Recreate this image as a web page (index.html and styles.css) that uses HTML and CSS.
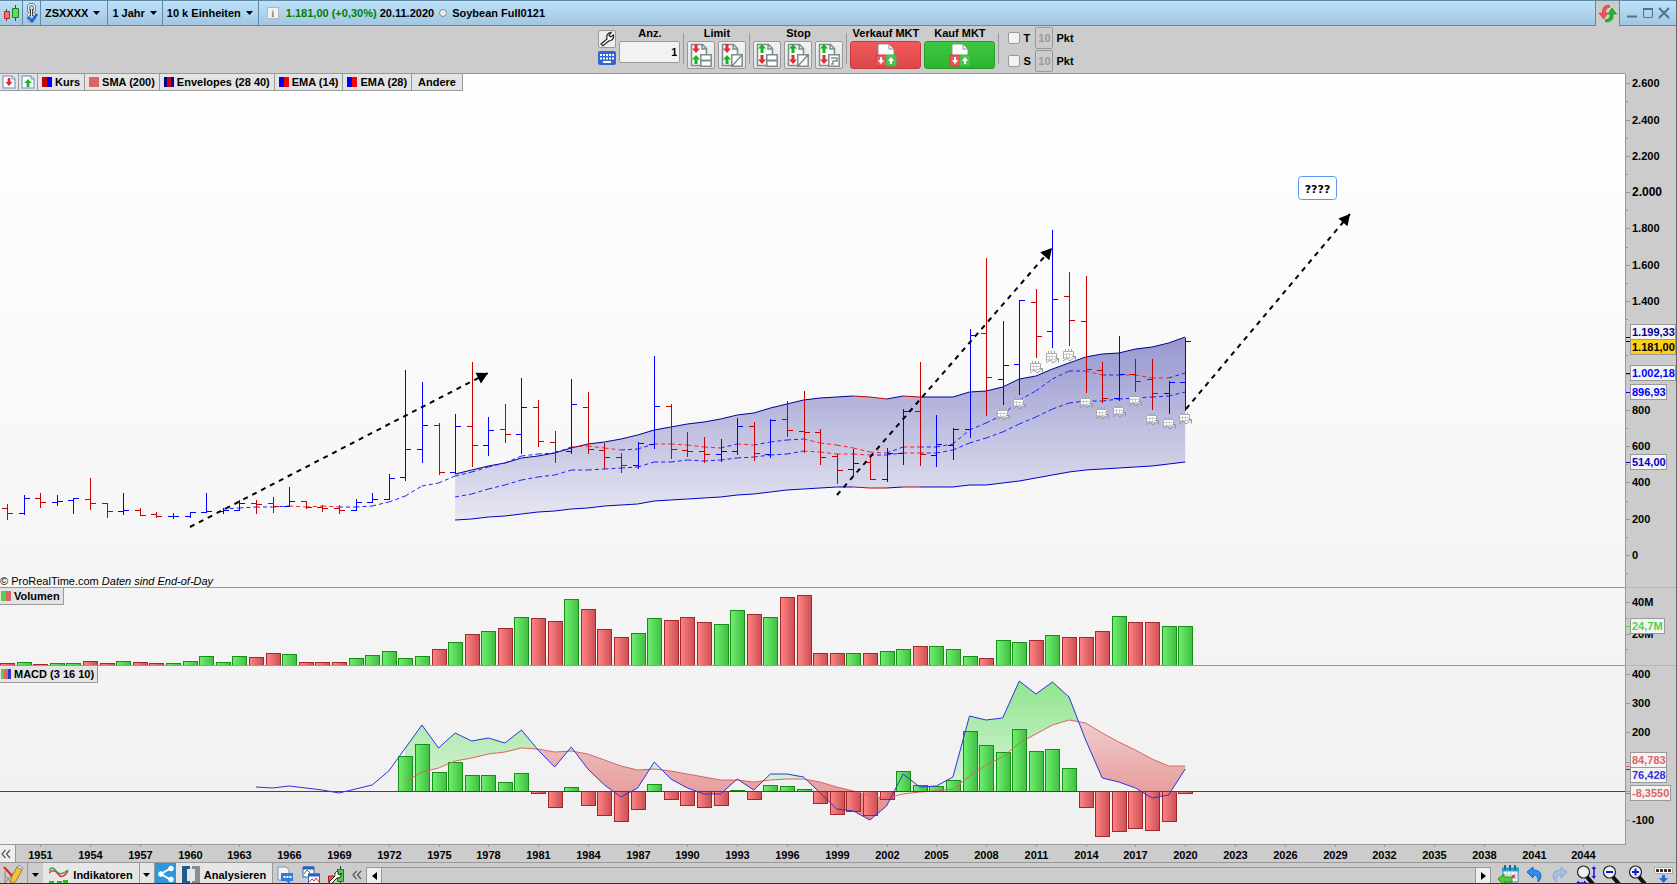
FILE: index.html
```html
<!DOCTYPE html>
<html lang="de">
<head>
  <meta charset="UTF-8">
  <meta name="viewport" content="width=device-width, initial-scale=1.0">
  <title>ZSXXXX - Soybean Full0121</title>
  <link rel="stylesheet" href="styles.css">
</head>
<body>

  <svg class="sprite" aria-hidden="true">
    <symbol id="order-doc" viewBox="0 0 22 24">
      <path d="M10 22.500H1.500V1.500h11l4 4V11M12 1.500v4.500h4.500" fill="#fafafa" stroke="#7d8c90" stroke-width="1.500"/>
    </symbol>
    <symbol id="arrow-down" viewBox="0 0 8 9">
      <path d="M2.500 0h3v4.500H8L4 9 0 4.500h2.500z"/>
    </symbol>
    <symbol id="arrow-up" viewBox="0 0 8 9">
      <path d="M2.500 9h3V4.500H8L4 0 0 4.500h2.500z"/>
    </symbol>
    <symbol id="box-line" viewBox="0 0 12 13">
      <path d="M.8.800h10.400v11.400H.8z" fill="#fff" stroke="#7d8c90" stroke-width="1.500"/>
      <path d="M1 6.500h10" stroke="#7d8c90" stroke-width="2"/>
    </symbol>
    <symbol id="box-slash" viewBox="0 0 12 13">
      <path d="M.8.800h10.400v11.400H.8zM1 12L11 1" fill="#fff" stroke="#7d8c90" stroke-width="1.500"/>
    </symbol>
    <symbol id="box-trail" viewBox="0 0 12 13">
      <path d="M.8.800h10.400v11.400H.8zM3 4h6v3H5v3H3" fill="#fff" stroke="#7d8c90" stroke-width="1.500"/>
    </symbol>
    <symbol id="market" viewBox="0 0 22 24">
      <path d="M3 13V2.500Q3 1 4.500 1H14l5 5v7z" fill="#fff" stroke="#8a8f8f"/>
      <path d="M14 1v5h5" fill="none" stroke="#8a8f8f"/>
      <path d="M1 12h10v11H2q-1 0-1-1z" fill="#e85a5e" stroke="#e23338"/>
      <path d="M11 12h10v10q0 1-1 1h-9z" fill="#4ec552" stroke="#35bb39"/>
      <path d="M5 14h2v3h2l-3 4-3-4h2zM15 21h2v-3h2l-3-4-3 4h2z" fill="#fff"/>
    </symbol>
    <symbol id="page" viewBox="0 0 14 14">
      <path d="M1 1h9l3 3v9H1z" fill="#fdfdfd" stroke="#8ab0cf" stroke-width="1.500"/>
      <path d="M10 1v3h3" fill="#dceaf5" stroke="#6f97b8"/>
    </symbol>
    <symbol id="lens" viewBox="0 0 20 20">
      <path d="M11 12l6 7" stroke="#111" stroke-width="4"/>
      <circle cx="7.500" cy="7" r="6" fill="#eef2f6" stroke="#222" stroke-width="1.200"/>
    </symbol>
    <symbol id="caret" viewBox="0 0 8 4"><path d="M0 0h7L3.500 4z"/></symbol>
  </svg>

  <div class="titlebar">
    <button class="title-item icon-candles" aria-label="Chart">
      <svg width="18" height="18" viewBox="0 0 18 18"><path d="M4.500 5v12M13.500 1v16" stroke="#444"/><path d="M2.500 7.500h5v7h-5z" fill="#e8787a" stroke="#c22"/><path d="M10.500 4.500h6v9h-6z" fill="#63db63" stroke="#17821a"/></svg>
    </button>
    <button class="title-item icon-chain" aria-label="Verknüpfung">
      <svg width="14" height="20" viewBox="0 0 14 20"><rect x="3.500" y="1.500" width="6" height="8" rx="3" fill="none" stroke="#555" stroke-width="3"/><rect x="3.500" y="1.500" width="6" height="8" rx="3" fill="none" stroke="#eee" stroke-width="1.500"/><rect x="3.500" y="10" width="6" height="8" rx="3" fill="none" stroke="#777" stroke-width="3"/><rect x="3.500" y="10" width="6" height="8" rx="3" fill="none" stroke="#eee" stroke-width="1.500"/><path d="M6.500 6v7" stroke="#444" stroke-width="3"/><path d="M6.500 6v7" stroke="#eee"/><path d="M3 14l4 4 5-7" fill="none" stroke="#1e66d8" stroke-width="2.500"/></svg>
    </button>
    <button class="title-item symbol-name">ZSXXXX<svg class="caret"><use href="#caret"/></svg></button>
    <button class="title-item">1 Jahr<svg class="caret"><use href="#caret"/></svg></button>
    <button class="title-item">10 k Einheiten<svg class="caret"><use href="#caret"/></svg></button>
    <div class="title-info">
      <span class="info-box">i</span>
      <span><span class="gain">1.181,00 (+0,30%)</span> 20.11.2020</span>
      <span class="dot"></span>
      <span>Soybean Full0121</span>
    </div>
    <button class="sync-tab" aria-label="Synchronisieren">
      <svg width="19" height="19" viewBox="0 0 19 19"><path d="M11 1Q4 1 4.500 9H1l4.500 6L10 9H7.500Q7 4 12 3z" fill="#f05558" stroke="#c33" stroke-width=".6"/><path d="M8 18q8 0 7-8h3.500L14 4 10 10h2q1 5-5 6z" fill="#22b52a" stroke="#0a8a12" stroke-width=".6"/></svg>
    </button>
    <div class="window-buttons">
      <button aria-label="Minimieren"><svg width="12" height="12"><path d="M1 9.500h10" stroke="#4b7590" stroke-width="2"/></svg></button>
      <button aria-label="Maximieren"><svg width="12" height="12"><path d="M1.500 1.500h9v9h-9z" fill="none" stroke="#4b7590" stroke-width="1"/><path d="M1 2h10" stroke="#4b7590" stroke-width="2"/></svg></button>
      <button aria-label="Schließen"><svg width="12" height="12"><path d="M1 1l10 10M11 1L1 11" stroke="#4b7590" stroke-width="2"/></svg></button>
    </div>
  </div>

  <div class="order-bar">
    <div class="tool-column">
      <button class="small-tool" aria-label="Einstellungen">
        <svg width="16" height="16" viewBox="0 0 16 16"><path d="M2 13l6-5q-1-4 2-6l2-.500-2 3 1.500 1.500 3-2q.5 4-2.500 5.500l-2 .3-6 5z" fill="#fff" stroke="#222" stroke-width="1.200"/></svg>
      </button>
      <button class="keyboard" aria-label="Tastatur">
        <svg width="18" height="14" viewBox="0 0 18 14"><path d="M2 4h14M2 7.500h14" stroke="#fff" stroke-width="2" stroke-dasharray="2 1"/><path d="M5 11h8" stroke="#fff" stroke-width="2"/></svg>
      </button>
    </div>
    <div class="order-group quantity">
      <label for="anz">Anz.</label>
      <input id="anz" type="text" value="1">
    </div>
    <div class="divider"></div>
    <div class="order-group">
      <span>Limit</span>
      <div class="order-buttons">
        <button aria-label="Kauf Limit"><svg width="22" height="24"><use href="#order-doc"/><use href="#arrow-down" x="2" y="1" width="8" height="9" fill="#e02b30"/><use href="#arrow-up" x="2" y="12" width="8" height="9" fill="#17b51c"/><use href="#box-line" x="10" y="11" width="12" height="13"/></svg></button>
        <button aria-label="Limit"><svg width="22" height="24"><use href="#order-doc"/><use href="#arrow-down" x="2" y="1" width="8" height="9" fill="#e02b30"/><use href="#arrow-up" x="2" y="12" width="8" height="9" fill="#17b51c"/><use href="#box-slash" x="10" y="11" width="12" height="13"/></svg></button>
      </div>
    </div>
    <div class="divider"></div>
    <div class="order-group">
      <span>Stop</span>
      <div class="order-buttons">
        <button aria-label="Stop"><svg width="22" height="24"><use href="#order-doc"/><use href="#arrow-up" x="2" y="1" width="8" height="9" fill="#17b51c"/><use href="#arrow-down" x="2" y="12" width="8" height="9" fill="#e02b30"/><use href="#box-line" x="10" y="11" width="12" height="13"/></svg></button>
        <button aria-label="Stop Linie"><svg width="22" height="24"><use href="#order-doc"/><use href="#arrow-up" x="2" y="1" width="8" height="9" fill="#17b51c"/><use href="#arrow-down" x="2" y="12" width="8" height="9" fill="#e02b30"/><use href="#box-slash" x="10" y="11" width="12" height="13"/></svg></button>
        <button aria-label="Trailing Stop"><svg width="22" height="24"><use href="#order-doc"/><use href="#arrow-up" x="2" y="1" width="8" height="9" fill="#17b51c"/><use href="#arrow-down" x="2" y="12" width="8" height="9" fill="#e02b30"/><use href="#box-trail" x="10" y="11" width="12" height="13"/></svg></button>
      </div>
    </div>
    <div class="divider"></div>
    <div class="order-group">
      <span>Verkauf MKT</span>
      <button class="market sell" aria-label="Verkauf MKT"><svg width="22" height="24"><use href="#market"/></svg></button>
    </div>
    <div class="order-group">
      <span>Kauf MKT</span>
      <button class="market buy" aria-label="Kauf MKT"><svg width="22" height="24"><use href="#market"/></svg></button>
    </div>
    <div class="divider"></div>
    <div class="points">
      <div class="point-row"><label><input type="checkbox">T</label><input class="pts" type="text" value="10" aria-label="T Pkt" disabled>Pkt</div>
      <div class="point-row"><label><input type="checkbox">S</label><input class="pts" type="text" value="10" aria-label="S Pkt" disabled>Pkt</div>
    </div>
  </div>

  <div class="charts">
    <div class="pane">
      <svg id="price" class="plot"></svg>
      <div class="legend price-legend">
        <button class="page-button" aria-label="Verkaufen"><svg width="14" height="14"><use href="#page"/><use href="#arrow-down" x="3" y="3" width="8" height="8" fill="#e02b30"/></svg></button>
        <button class="page-button" aria-label="Kaufen"><svg width="14" height="14"><use href="#page"/><use href="#arrow-up" x="3" y="4" width="8" height="8" fill="#17b51c"/></svg></button>
        <button><i class="swatch kurs"></i>Kurs</button>
        <button><i class="swatch sma"></i>SMA (200)</button>
        <button><i class="swatch envelope"></i>Envelopes (28 40)</button>
        <button><i class="swatch ema"></i>EMA (14)</button>
        <button><i class="swatch ema"></i>EMA (28)</button>
        <button class="other">Andere</button>
      </div>
      <div class="credit">© ProRealTime.com <em>Daten sind End-of-Day</em></div>
    </div>
    <div class="axis"><svg id="price-axis" class="plot"></svg></div>

    <div class="pane">
      <svg id="volume" class="plot"></svg>
      <div class="legend"><button><i class="swatch volume"></i>Volumen</button></div>
    </div>
    <div class="axis"><svg id="volume-axis" class="plot"></svg></div>

    <div class="pane">
      <svg id="macd" class="plot"></svg>
      <div class="legend"><button><i class="swatch macd"></i>MACD (3 16 10)</button></div>
    </div>
    <div class="axis"><svg id="macd-axis" class="plot"></svg></div>
  </div>

  <div class="time-axis">
    <svg id="years" class="plot"></svg>
    <button class="collapse" aria-label="Einklappen"><svg width="10" height="10"><path d="M4.500 1L1 5l3.500 4M9 1L5.500 5 9 9" fill="none" stroke="#555" stroke-width="1.200"/></svg></button>
  </div>

  <div class="bottom-bar">
    <button class="draw" aria-label="Zeichnen"><svg width="22" height="20" viewBox="0 0 22 20"><path d="M2 6v12l8-10M2 10l7 9" fill="none" stroke="#888"/><path d="M1 2l10 11" stroke="#e02020" stroke-width="2"/><path d="M8 13l6-11 5 3-6 11-5 3z" fill="#f5c33c" stroke="#a77a1c"/><path d="M14 2l5 3 1-2-4-3z" fill="#ddd" stroke="#777" stroke-width=".7"/></svg></button>
    <button class="drop" aria-label="Zeichenmenü"><svg class="caret"><use href="#caret"/></svg></button>
    <button class="light indicators"><svg width="20" height="20" viewBox="0 0 20 20"><path d="M0 6q3-6 7 0t12-1" fill="none" stroke="#39a93e" stroke-width="1.500"/><path d="M0 8q5-5 9 1t10-3" fill="none" stroke="#c44" stroke-width="1.500"/><path d="M0 20v-4h5v2h3v-2h5v4zM14 20v-5h5v5z" fill="#1fc020"/><path d="M5 18h9v2H5z" fill="#d23"/></svg>Indikatoren</button>
    <button class="light drop" aria-label="Indikatormenü"><svg class="caret"><use href="#caret"/></svg></button>
    <button class="share" aria-label="Teilen"><svg width="18" height="18" viewBox="0 0 18 18"><path d="M14 3L4 9l10 6" fill="none" stroke="#fff" stroke-width="2"/><circle cx="14" cy="3.500" r="2.700" fill="#fff"/><circle cx="4" cy="9" r="2.700" fill="#fff"/><circle cx="14" cy="14.500" r="2.700" fill="#fff"/></svg></button>
    <button class="light analyse"><svg width="18" height="20" viewBox="0 0 18 20"><path d="M0 1h8v3H5v12h3v4H0z" fill="#1d5c8c"/><path d="M10 1h8v19h-8v-4h3V4h-3z" fill="#8b8e91"/></svg>Analysieren</button>
    <button class="tool" aria-label="Kommentar"><svg width="17" height="20" viewBox="0 0 17 20"><path d="M1 2h8l3 3v10H1z" fill="#f2f6fa" stroke="#7c93a8"/><path d="M4 8h12v8h-3v3l-4-3H4z" fill="#2f7be0"/><path d="M6.500 12h8" stroke="#fff" stroke-width="2" stroke-dasharray="2 1"/></svg></button>
    <button class="tool" aria-label="Charts anordnen"><svg width="18" height="20" viewBox="0 0 18 20"><path d="M1 2h11v10H1z" fill="#fff" stroke="#2660c8"/><path d="M1 3h11" stroke="#2660c8" stroke-width="3"/><path d="M6.500 9h11v10h-11z" fill="#fff" stroke="#2660c8"/><path d="M6 10h12" stroke="#2660c8" stroke-width="3"/><path d="M2 9l3-4 3 3" fill="none" stroke="#1a9c20"/><path d="M7 17l3-3 2 2 2-3 3 4" fill="none" stroke="#d22"/></svg></button>
    <button class="tool" aria-label="Einstellungen"><svg width="18" height="20" viewBox="0 0 18 20"><path d="M13.500 1v18" stroke="#333"/><path d="M10.500 4.500h6v12h-6z" fill="#45cf49" stroke="#147e18"/><path d="M1.500 11h5v6h-5z" fill="#e2585c" stroke="#b11"/><path d="M2 17l6-6q-1-4 3-5v3l2 1 1-2q1 5-4 5l-6 6z" fill="#fff" stroke="#222"/></svg></button>
    <button class="tool fold" aria-label="Weniger"><svg width="10" height="10"><path d="M4.500 1L1 5l3.500 4M9 1L5.500 5 9 9" fill="none" stroke="#555" stroke-width="1.200"/></svg></button>
    <div class="scroller">
      <button aria-label="Zurück"><svg width="5" height="8"><path d="M5 0v8L0 4z"/></svg></button>
      <button aria-label="Vor"><svg width="5" height="8"><path d="M0 0v8l5-4z"/></svg></button>
    </div>
    <div class="zoom-tools">
      <button aria-label="Zum Datum"><svg width="22" height="20" viewBox="0 0 22 20"><path d="M6 4h15v13H6z" fill="#fff" stroke="#3f86a8"/><path d="M5 4.500h17" stroke="#2f9fc5" stroke-width="4"/><path d="M8 0v5M13 0v5M18 0v5" stroke="#176f94" stroke-width="2"/><path d="M7 10h14M7 13h14M10 7v9M14 7v9M18 7v9" stroke="#b5cbd6"/><path d="M15 10h3v3h-3z" fill="#e44"/><path d="M1 14l6-5v3h8v5H7v3z" fill="#52cd35" stroke="#2b9518"/></svg></button>
      <button aria-label="Rückgängig"><svg width="18" height="18" viewBox="0 0 18 18"><path d="M2 7l6-5v3q8 0 8 6 0 3-3 6 1-7-5-7v3z" fill="#2e8ff0" stroke="#1a62c0"/></svg></button>
      <button aria-label="Wiederholen"><svg width="18" height="18" viewBox="0 0 18 18"><path d="M16 7l-6-5v3Q2 5 2 11q0 3 3 6-1-7 5-7v3z" fill="#a4bfdf" stroke="#8ea9cd"/></svg></button>
      <button aria-label="Zoom anpassen"><svg width="20" height="20"><use href="#lens" x="0" y="0" width="20" height="20"/><path d="M18 3v10M2 18h8" stroke="#1414e0" stroke-width="1.500"/><path d="M15.500 4L18 1l2 3zM15.500 11l2.500 3 2-3zM3 15.500v5L0 18zM8 15.500v5l3-2.500z" fill="#1414e0"/></svg></button>
      <button aria-label="Verkleinern"><svg width="20" height="20"><use href="#lens" width="20" height="20"/><path d="M4 7h7" stroke="#1414e0" stroke-width="2"/></svg></button>
      <button aria-label="Vergrößern"><svg width="20" height="20"><use href="#lens" width="20" height="20"/><path d="M4 7h7M7.500 3.500v7" stroke="#1414e0" stroke-width="2"/></svg></button>
      <button aria-label="Leiste ausblenden"><svg width="19" height="18"><path d="M.5 2.500h18v6H.5z" fill="#fff" stroke="#aaa"/><path d="M2 5.500h15" stroke="#333" stroke-width="3" stroke-dasharray="3 1"/><path d="M8 10h3v3h3l-4.500 5L5 13h3z" fill="#1f6fd0"/></svg></button>
    </div>
  </div>

  <script>
    // plot units: 1625 wide, y counted from the top of the window
    const PLOT_WIDTH = 1625;
    const panes = {
      price: { top: 74, height: 513 },
      volume: { top: 588, height: 77 },
      macd: { top: 666, height: 178 }
    };

    // yearly bars from 1949: open, high, low, close
    const bars = [
      [508,504,519,513],[513,495,514,498],[498,493,507,502],[502,495,505,501],[500,498,513,498],[499,478,509,503],
      [503,503,517,511],[511,493,514,510],[510,508,515,515],[514,512,517,516],[516,513,518,516],[516,512,517,512],
      [512,493,512,511],[511,508,513,510],[510,500,510,503],[503,500,513,504],[503,497,512,506],[506,487,506,501],
      [501,501,508,507],[507,505,511,508],[508,505,513,510],[510,499,510,502],[502,493,502,499],[499,474,499,478],
      [477,370,480,449],[449,382,462,425],[425,423,474,472],[472,414,473,426],[426,362,466,445],[445,417,455,430],
      [429,404,442,434],[434,378,453,407],[407,400,446,441],[442,431,462,451],[451,379,453,404],[407,392,453,449],
      [450,443,468,457],[457,453,472,465],[465,442,468,443],[444,356,448,406],[406,404,458,449],[450,432,456,451],
      [451,437,462,454],[454,439,461,451],[451,418,454,426],[426,422,460,453],[454,419,457,420],[419,401,436,430],
      [431,391,452,432],[432,429,464,457],[456,454,483,470],[469,449,475,463],[462,455,479,479],[479,448,481,453],
      [453,409,464,411],[411,362,465,454],[455,415,466,444],[445,428,459,429],[429,329,437,335],[333,258,415,377],
      [379,321,404,365],[364,300,394,300],[302,289,357,336],[331,230,347,299],[296,272,345,320],[321,276,392,369],
      [370,362,402,398],[398,336,400,374],[374,359,391,381],[379,359,409,393],[393,381,413,382],[382,338,410,341]
    ];
    const volume = [
      663,662,664,663,663,661,663,661,662,663,663,661,656,662,656,657,653,654,662,662,662,658,655,651,
      658,656,649,642,634,631,628,617,618,621,599,609,629,637,633,618,620,617,622,624,610,614,617,597,
      595,653,653,653,653,651,649,646,646,649,656,658,640,642,640,635,637,637,631,616,622,622,626,626
    ];
    // from 1976
    const upper = [474,470,466,463,458,456,453,448,444,442,439,435,430,427,424,422,419,415,413,408,404,400,398,397,396,
      397,399,396,397,397,397,392,391,387,379,376,369,363,357,354,353,349,347,343,337];
    const lower = [520,519,517,516,514,512,511,509,508,506,505,504,501,500,499,498,497,495,494,492,490,489,488,487,487,
      488,488,487,487,487,487,485,485,483,481,478,475,472,470,469,468,467,466,464,462];
    const ema28 = [497,494,489,485,480,477,475,470,470,469,468,467,462,462,460,461,460,458,457,455,454,451,452,454,454,
      455,455,453,453,453,450,443,438,432,424,417,409,403,401,401,399,398,397,396,392];
    // from 1962
    const ema14 = [509,508,507,507,506,507,506,507,507,506,502,496,486,483,476,472,467,463,456,454,453,447,446,448,450,
      449,444,444,445,447,448,444,445,442,440,439,443,445,448,452,453,447,447,447,444,430,423,415,400,391,379,371,371,
      375,375,375,378,378,373];
    const envelopeDown = [2001, 2002, 2004];
    const ema28Down = [1998, 1999, 2000, 2001, 2004];
    const ema14Down = [1967, 1968, 1969, 1984, 1985, 1986, 1989, 1990, 1991, 1992, 1994, 1998, 1999, 2000, 2001, 2002,
      2004, 2015, 2017, 2018, 2019];
    // from 1973
    const histogram = [756,744,772,762,775,775,782,773,793,807,787,805,815,821,809,784,799,805,807,805,790,799,785,786,
      789,803,814,811,815,799,771,785,786,780,731,745,752,729,751,749,768,807,836,831,828,830,821,793];
    const signal = [782,772,768,761,758,754,752,748,749,752,751,754,760,766,770,769,771,774,777,780,780,782,780,779,
      779,782,787,791,796,798,794,792,791,789,776,765,757,743,734,725,720,723,733,742,750,759,766,766];
    // from 1964
    const macdLine = [787,788,786,788,790,793,789,785,771,748,725,748,733,741,738,743,730,750,767,747,769,785,797,788,
      762,779,788,794,794,779,790,774,774,777,793,809,811,820,806,774,787,786,777,716,720,718,681,694,682,697,740,778,
      782,788,798,795,769];
    const rollovers = [[2009,414],[2010,403],[2011,367],[2012,357],[2013,355],[2014,402],[2015,413],[2016,411],
      [2017,400],[2018,419],[2019,423],[2020,418]];
    const trends = [[190,527,488,373],[837,495,1052,248],[1186,409,1350,214]];
    const ZERO = 791;

    function scale(name) {
      const svg = document.getElementById(name);
      const pane = panes[name];
      const sx = svg.clientWidth / PLOT_WIDTH;
      const sy = svg.clientHeight / pane.height;
      return {
        svg,
        px: v => v * sx,
        x: year => (40.3 + 16.593 * (year - 1951)) * sx,
        y: v => (v - pane.top) * sy,
        height: svg.clientHeight
      };
    }

    const points = (s, start, values) => values.map((v, i) => `${s.x(start + i)},${s.y(v)}`);

    // a line drawn year by year, in red where it falls
    function trendLine(s, start, values, down, cls) {
      let up = '', red = '';
      for (let i = 1; i < values.length; i++) {
        const seg = `M${s.x(start + i - 1)} ${s.y(values[i - 1])}L${s.x(start + i)} ${s.y(values[i])}`;
        if (down.includes(start + i)) red += seg; else up += seg;
      }
      return `<path class="${cls}" d="${up}"/><path class="${cls} falling" d="${red}"/>`;
    }

    function column(s, year, top, bottom, up) {
      const x = Math.round(s.x(year)) - 7;
      const a = Math.round(s.y(Math.min(top, bottom)));
      const b = Math.round(s.y(Math.max(top, bottom)));
      return `<rect class="column ${up ? 'up' : 'down'}" x="${x + 0.5}" y="${a + 0.5}" width="14" height="${Math.max(b - a, 1)}"/>`;
    }

    function columnGradients() {
      return `<defs>
        <linearGradient id="upFill"><stop offset="0" stop-color="#70f070"/><stop offset="1" stop-color="#3fbe42"/></linearGradient>
        <linearGradient id="downFill"><stop offset="0" stop-color="#ff8484"/><stop offset="1" stop-color="#cc5053"/></linearGradient>
      </defs>`;
    }

    function drawPrice() {
      const s = scale('price');
      let out = `<defs><linearGradient id="band" gradientUnits="userSpaceOnUse" x1="0" x2="0" y1="${s.y(337)}" y2="${s.y(520)}">
        <stop offset="0" stop-color="#9797cf"/><stop offset="1" stop-color="#e8e8f2"/></linearGradient></defs>`;
      out += `<polygon fill="url(#band)" points="${points(s, 1976, upper).concat(points(s, 1976, lower).reverse()).join(' ')}"/>`;
      out += trendLine(s, 1976, upper, envelopeDown, 'envelope-line upper');
      out += trendLine(s, 1976, lower, envelopeDown, 'envelope-line');
      out += trendLine(s, 1962, ema14, ema14Down, 'ema-line');
      out += trendLine(s, 1976, ema28, ema28Down, 'ema-line');
      bars.forEach(([open, high, low, close], i) => {
        const x = Math.round(s.x(1949 + i)) + 0.5;
        const o = Math.round(s.y(open)) + 0.5;
        const c = Math.round(s.y(close)) + 0.5;
        out += `<path class="bar ${close <= open ? 'up' : 'down'}" d="M${x} ${s.y(high)}V${s.y(low) + 1}M${x - 5.5} ${o}H${x}M${x} ${c}h5.500"/>`;
      });
      rollovers.forEach(([year, y]) => {
        out += `<g class="rollover" transform="translate(${Math.round(s.x(year)) - 7} ${Math.round(s.y(y)) - 6})">
          <path d="M1 2h11v7H1z"/><path d="M1.500 10V2.500h10v5M3.500 0v3M6.500 0v3M9.500 0v3"/>
          <path class="days" d="M2 5.500h9M2 8.500h8M4.500 4v6M7.500 4v6"/>
          <path class="zigzag" d="M1 12l4-3 3 3 5-4M10 7.500h3.500v4"/></g>`;
      });
      trends.forEach(([x1, y1, x2, y2]) => {
        const ax = s.px(x1), ay = s.y(y1), bx = s.px(x2), by = s.y(y2);
        const angle = Math.atan2(by - ay, bx - ax) * 180 / Math.PI;
        out += `<path class="trend" d="M${ax} ${ay}L${bx} ${by}"/>
          <path transform="translate(${bx} ${by}) rotate(${angle})" d="M0 0L-11-6V6z"/>`;
      });
      const nx = Math.round(s.px(1298)), ny = Math.round(s.y(176));
      out += `<rect class="note" x="${nx + 0.5}" y="${ny + 0.5}" width="38" height="23" rx="3"/>
        <text class="note-text" x="${nx + 19.5}" y="${ny + 17}">????</text>`;
      s.svg.innerHTML = out;
    }

    function drawVolume() {
      const s = scale('volume');
      s.svg.innerHTML = columnGradients() + volume.map((v, i) => column(s, 1949 + i, v, 666, bars[i][3] <= bars[i][0])).join('');
    }

    function drawMacd() {
      const s = scale('macd');
      let out = `<defs>
        <linearGradient id="above" gradientUnits="userSpaceOnUse" x1="0" x2="0" y1="${s.y(680)}" y2="${s.y(795)}"><stop offset="0" stop-color="#8ee68e"/><stop offset="1" stop-color="#dff2df"/></linearGradient>
        <linearGradient id="below" gradientUnits="userSpaceOnUse" x1="0" x2="0" y1="${s.y(715)}" y2="${s.y(820)}"><stop offset="0" stop-color="#efd2d2"/><stop offset="1" stop-color="#e58a8a"/></linearGradient></defs>`;
      const line = macdLine.slice(9);
      const area = { above: '', below: '' };
      for (let i = 1; i < signal.length; i++) {
        const xa = s.x(1972 + i), xb = s.x(1973 + i);
        const a = signal[i - 1] - line[i - 1], b = signal[i] - line[i];
        const side = d => d > 0 ? 'above' : 'below';
        if (a * b < 0) {
          // split the area where the two lines cross
          const t = a / (a - b);
          const xm = xa + (xb - xa) * t, ym = s.y(line[i - 1] + (line[i] - line[i - 1]) * t);
          area[side(a)] += `M${xa} ${s.y(line[i - 1])}L${xm} ${ym}L${xa} ${s.y(signal[i - 1])}z`;
          area[side(b)] += `M${xb} ${s.y(line[i])}L${xm} ${ym}L${xb} ${s.y(signal[i])}z`;
        } else {
          area[side(a + b)] += `M${xa} ${s.y(line[i - 1])}L${xb} ${s.y(line[i])}V${s.y(signal[i])}L${xa} ${s.y(signal[i - 1])}z`;
        }
      }
      out += `<path class="area" fill="url(#above)" d="${area.above}"/><path class="area" fill="url(#below)" d="${area.below}"/>`;
      histogram.forEach((v, i) => { out += column(s, 1973 + i, v, ZERO, v < ZERO); });
      const zero = Math.round(s.y(ZERO)) + 0.5;
      out += `<polyline class="signal-line" points="${points(s, 1973, signal).join(' ')}"/>
        <polyline class="macd-line" points="${points(s, 1964, macdLine).join(' ')}"/>
        <path class="zero-line" d="M0 ${zero}H${s.px(PLOT_WIDTH)}"/>`;
      s.svg.innerHTML = out;
    }

    function drawAxis(name, labels, minors, tags) {
      const svg = document.getElementById(name + '-axis');
      const pane = panes[name];
      const y = v => Math.round((v - pane.top) * svg.clientHeight / pane.height);
      let out = '';
      labels.forEach(([v, text, big]) => {
        out += `<path class="tick" d="M0 ${y(v) + 0.5}h4"/>`;
        if (text) out += `<text class="${big ? 'big' : ''}" x="6" y="${y(v) + 4}">${text}</text>`;
      });
      minors.forEach(v => { out += `<path class="tick" d="M0 ${y(v) + 0.5}h2"/>`; });
      tags.forEach(([v, top, text, width, cls]) => {
        out += `<g class="tag ${cls}"><path d="M0 ${y(v) + 0.5}h5"/><rect x="4.500" y="${y(top) + 0.5}" width="${width}" height="15"/>
          <text x="6" y="${y(top) + 12}">${text}</text></g>`;
      });
      svg.innerHTML = out;
    }

    function drawYears() {
      const svg = document.getElementById('years');
      const width = document.getElementById('price').clientWidth;
      let out = '';
      for (let year = 1951; year <= 2044; year += 3) {
        const x = Math.round((40.3 + 16.593 * (year - 1951)) * width / PLOT_WIDTH) + 0.5;
        out += `<path class="tick" d="M${x} 0v3"/><text x="${x}" y="15">${year}</text>`;
      }
      svg.innerHTML = out;
    }

    function draw() {
      drawPrice();
      drawVolume();
      drawMacd();
      const priceY = p => 555 - p * 0.18142;
      const labels = [], minors = [];
      for (let p = 2600; p >= 0; p -= 200) {
        const text = p >= 1000 ? (p / 1000).toFixed(3) : String(p);
        labels.push([priceY(p), p === 1200 || p === 1000 ? '' : text, p === 2000]);
        minors.push(priceY(p - 100));
      }
      drawAxis('price', labels, minors, [
        [337, 324, '1.199,33', 45, 'navy'],
        [341, 339, '1.181,00', 45, 'last'],
        [373, 365, '1.002,18', 45, 'blue'],
        [392, 384, '896,93', 36, 'blue'],
        [462, 454, '514,00', 36, 'medium']
      ]);
      drawAxis('volume', [[602, '40M'], [634, '20M']], [618, 649], [[626, 618, '24,7M', 34, 'green']]);
      drawAxis('macd', [[674, '400'], [703, '300'], [732, '200'], [762, ''], [791, ''], [820, '-100']], [], [
        [766, 752, '84,783', 36, 'red'],
        [769, 767, '76,428', 36, 'macd'],
        [793, 785, '-8,3550', 40, 'red']
      ]);
      drawYears();
    }

    draw();
    window.addEventListener('resize', draw);
  </script>

</body>
</html>
```
FILE: styles.css
```css
* {
  box-sizing: border-box;
}

body {
  margin: 0;
  height: 100vh;
  display: flex;
  flex-direction: column;
  overflow: hidden;
  background: #ccc;
  border-right: 1px solid #666;
  font-family: "Liberation Sans", Arial, sans-serif;
  font-size: 11px;
  font-weight: bold;
  color: #000;
}

button,
input {
  font: inherit;
  color: inherit;
  margin: 0;
  padding: 0;
  border: none;
  border-radius: 0;
  background: none;
}

button {
  display: flex;
  align-items: center;
  justify-content: center;
  white-space: nowrap;
  cursor: pointer;
}

svg {
  display: block;
  flex: none;
}

.sprite {
  position: absolute;
  width: 0;
  height: 0;
}

.caret {
  width: 8px;
  height: 4px;
}

/* title bar */
.titlebar {
  flex: none;
  display: flex;
  height: 26px;
  border-top: 1px solid #5f89a6;
  background: linear-gradient(#bfe2fb, #a1c5df);
}

.title-item,
.title-info {
  border-right: 1px solid #6189a5;
  border-bottom: 1px solid #6189a5;
  gap: 5px;
  padding: 0 4px;
}

.icon-candles {
  width: 23px;
}

.icon-chain {
  width: 18px;
}

.title-item.icon-candles,
.title-item.icon-chain {
  padding: 0;
}

.title-item.symbol-name {
  padding-right: 6px;
}

.title-info {
  flex: 1;
  display: flex;
  align-items: center;
  gap: 5px;
  padding-left: 8px;
}

.info-box {
  width: 12px;
  height: 12px;
  margin-right: 2px;
  border: 1px solid #b5b5b5;
  background: #f4f4f4;
  color: #888;
  font-family: "Liberation Serif", serif;
  line-height: 10px;
  text-align: center;
}

.gain {
  color: #008000;
}

.dot {
  width: 8px;
  height: 8px;
  border: 1px solid #888;
  border-radius: 50%;
  background: #eee;
}

.sync-tab {
  width: 23px;
  background: #ccc;
}

.window-buttons {
  display: flex;
  gap: 4px;
  padding: 0 6px;
  border-left: 1px solid #6189a5;
  border-bottom: 1px solid #6189a5;
}

/* order bar */
.order-bar {
  flex: none;
  display: flex;
  justify-content: center;
  gap: 3px;
  height: 47px;
  padding-right: 4px;
}

.tool-column {
  display: flex;
  flex-direction: column;
  gap: 3px;
  padding-top: 4px;
}

.small-tool {
  width: 18px;
  height: 18px;
  border: 1px solid #999;
  border-radius: 2px;
  background: #eee;
}

.keyboard {
  width: 18px;
  height: 14px;
  border-radius: 2px;
  background: #2f67cf;
}

.order-group {
  display: flex;
  flex-direction: column;
  align-items: center;
  gap: 2px;
  padding-top: 1px;
  line-height: 12px;
}

.quantity input {
  width: 61px;
  height: 22px;
  padding: 0 2px;
  border: 1px solid #999;
  border-radius: 2px;
  background: #f2f2f2;
  text-align: right;
}

.divider {
  width: 1px;
  height: 31px;
  margin-top: 7px;
  background: #999;
}

.order-buttons {
  display: flex;
  gap: 3px;
}

.order-buttons button {
  width: 28px;
  height: 28px;
  border: 1px solid #999;
  border-radius: 2px;
  background: linear-gradient(#f2f2f2, #e2e2e2);
}

.market {
  width: 71px;
  height: 28px;
  border-radius: 3px;
}

.sell {
  border: 1px solid #cc3c3f;
  background: linear-gradient(#f15a5c, #db484b);
}

.buy {
  border: 1px solid #239f27;
  background: linear-gradient(#3dc842, #2cb430);
}

.points {
  display: flex;
  flex-direction: column;
  gap: 1px;
  padding: 1px 0 0 6px;
}

.point-row,
.point-row label {
  display: flex;
  align-items: center;
  gap: 3px;
}

.point-row label {
  width: 24px;
}

.point-row input[type="checkbox"] {
  appearance: none;
  width: 12px;
  height: 12px;
  border: 1px solid #999;
  border-radius: 2px;
  background: #f2f2f2;
}

.pts {
  width: 18px;
  height: 22px;
  border: 1px solid #999;
  border-radius: 2px;
  text-align: center;
  color: #999;
}

/* charts */
.charts {
  flex: 1;
  min-height: 0;
  display: grid;
  grid-template-columns: minmax(0, 1fr) 51px;
  grid-template-rows: minmax(0, 514fr) minmax(0, 78fr) minmax(0, 179fr);
  background: linear-gradient(#fff, #f0f0f0);
}

.pane {
  position: relative;
  border-top: 1px solid #999;
}

.axis {
  border-left: 1px solid #999;
  border-top: 1px solid #b5b5b5;
  background: #ccc;
}

.axis:nth-child(2) {
  border-top-color: #ccc;
}

.plot {
  width: 100%;
  height: 100%;
}

.legend {
  position: absolute;
  top: -1px;
  left: 0;
  display: flex;
}

.legend button {
  height: 18px;
  gap: 3px;
  padding: 0 3px 0 1px;
  border: 1px solid #999;
  border-left: none;
  background: #e4e4e4;
}

.price-legend button {
  padding: 0 4px;
}

.legend .page-button {
  width: 19px;
  padding: 0;
}

.legend .other {
  padding: 0 6px;
}

.swatch {
  width: 10px;
  height: 10px;
}

.kurs {
  background: linear-gradient(90deg, #c00 50%, #00f 50%);
}

.sma {
  background: #dc6464;
}

.envelope {
  background: linear-gradient(90deg, #000096 30%, #c00 30% 70%, #0000c8 70%);
}

.ema {
  background: linear-gradient(90deg, #00f 50%, #f00 50%);
}

.volume {
  background: linear-gradient(90deg, #50d250 50%, #dc6464 50%);
}

.swatch.macd {
  background: linear-gradient(90deg, #50d250 30%, #dc6464 30% 70%, #3232dc 70%);
}

.credit {
  position: absolute;
  left: 0;
  bottom: 0;
  font-weight: normal;
}

/* plots */
.bar {
  fill: none;
  shape-rendering: crispEdges;
}

.bar.up {
  stroke: #00f;
}

.bar.down {
  stroke: #c80000;
}

.envelope-line {
  fill: none;
  stroke: #0000c8;
}

.envelope-line.upper {
  stroke: #000096;
}

.envelope-line.falling {
  stroke: #c80000;
}

.ema-line {
  fill: none;
  stroke: #1e1eff;
  stroke-dasharray: 4 3;
}

.ema-line.falling {
  stroke: #ff1e1e;
}

.rollover path {
  fill: none;
  stroke: #aaa;
}

.rollover path:first-child {
  fill: #fff;
  stroke: none;
}

.rollover .days {
  stroke: #ccc;
}

.rollover .zigzag {
  stroke: #999;
}

.trend {
  stroke: #000;
  stroke-width: 2;
  stroke-dasharray: 5 5;
}

.note {
  fill: #fff;
  stroke: #5f96f5;
}

.note-text {
  font-family: "DejaVu Sans", sans-serif;
  text-anchor: middle;
}

.column.up {
  fill: url(#upFill);
  stroke: #149114;
}

.column.down {
  fill: url(#downFill);
  stroke: #a0282b;
}

.area,
.zero-line,
.tick {
  shape-rendering: crispEdges;
}

.signal-line {
  fill: none;
  stroke: #dc6464;
}

.macd-line,
.zero-line {
  fill: none;
  stroke: #3232dc;
}

.tick {
  stroke: #999;
}

.big {
  font-size: 12px;
}

.tag rect {
  fill: #f4f4f4;
  stroke: #999;
}

.tag.last rect {
  fill: #fcd116;
}

.tag path {
  stroke: currentColor;
}

.tag text {
  fill: currentColor;
}

.tag.navy {
  color: #000096;
}

.tag.blue {
  color: #00f;
}

.tag.medium {
  color: #0000c8;
}

.tag.green {
  color: #50d250;
}

.tag.red {
  color: #dc6464;
}

.tag.macd {
  color: #3232dc;
}

/* time axis */
.time-axis {
  flex: none;
  position: relative;
  height: 18px;
}

.time-axis::before {
  content: "";
  position: absolute;
  top: 0;
  left: 0;
  right: 50px;
  border-top: 1px solid #999;
}

.time-axis text {
  text-anchor: middle;
}

.collapse {
  position: absolute;
  top: 1px;
  left: 0;
  width: 16px;
  height: 17px;
  padding-right: 3px;
  border-right: 1px solid #999;
  background: #eee;
}

/* bottom bar */
.bottom-bar {
  flex: none;
  display: flex;
  height: 22px;
  overflow: hidden;
  border-top: 1px solid #999;
  border-bottom: 1px solid #26343c;
}

.bottom-bar > button {
  align-items: flex-start;
  height: 24px;
  padding-top: 2px;
}

.draw {
  width: 28px;
  border-right: 1px solid #999;
}

.bottom-bar .drop {
  width: 15px;
  padding-top: 10px;
}

.bottom-bar .light {
  border-right: 1px solid #999;
  background: #e6e6e6;
}

.bottom-bar .indicators,
.bottom-bar .analyse {
  width: 97px;
  gap: 4px;
  line-height: 20px;
}

.bottom-bar .share {
  width: 21px;
  background: #2f97dc;
}

.bottom-bar .tool {
  width: 25px;
}

.bottom-bar .fold {
  width: 18px;
  padding-top: 7px;
}

.scroller {
  flex: 1;
  display: flex;
  justify-content: space-between;
  height: 17px;
  margin-top: 4px;
  border: 1px solid #999;
}

.scroller button {
  width: 15px;
  background: #eee;
}

.scroller button:first-child {
  border-right: 1px solid #999;
}

.scroller button:last-child {
  border-left: 1px solid #999;
}

.zoom-tools {
  display: flex;
  gap: 5px;
  padding: 2px 2px 0 6px;
}

.zoom-tools button {
  align-items: flex-start;
  width: 21px;
}
```
